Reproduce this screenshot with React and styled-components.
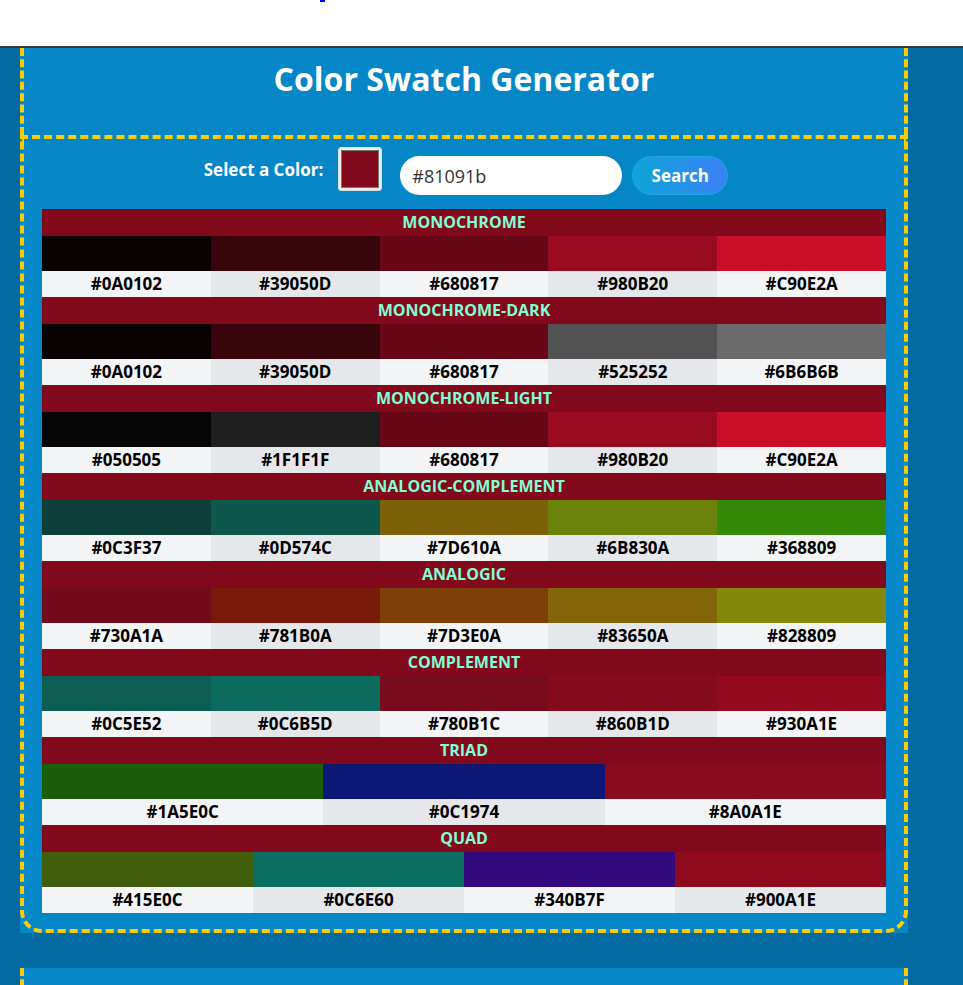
import React, { useState } from "react";
import styled, { createGlobalStyle } from "styled-components";

const GlobalStyle = createGlobalStyle`
  body {
    margin: 0;
    background: #036aa2;
    font-family: "Open Sans", "Liberation Sans", sans-serif;
  }
`;

const TopStrip = styled.div`
  height: 46px;
  background: #fff;
  position: relative;
  border-bottom: 2px solid #3a3a3a;
`;

const LinkMark = styled.a`
  position: absolute;
  left: 320px;
  top: 0;
  width: 5px;
  height: 2px;
  background: #0000ee;
`;

const Page = styled.main`
  background: #036aa2;
  padding: 0 55px 0 20px;
  height: 937px;
  overflow: hidden;
`;

const Card = styled.section`
  background: #0586c7;
  margin-bottom: 35px;
`;

const Header = styled.header`
  height: 87px;
  box-sizing: border-box;
  padding-top: 9px;
  border-left: 4px dashed #ffcc00;
  border-right: 4px dashed #ffcc00;
  text-align: center;
`;

const Title = styled.h1`
  margin: 0;
  color: #fff;
  font-size: 32px;
  line-height: 44px;
  font-weight: 700;
`;

const Body = styled.div`
  border: 4px dashed #ffcc00;
  border-radius: 0 0 22px 22px;
  padding: 8px 18px 16px 18px;
`;

const Form = styled.form`
  display: flex;
  justify-content: center;
  align-items: flex-start;
  margin-bottom: 14px;
  padding-left: 4px;
`;

const Label = styled.label`
  color: #fff;
  font-size: 17px;
  font-weight: 700;
  margin-top: 11px;
  margin-right: 15px;
`;

const ColorPicker = styled.input`
  width: 44px;
  height: 44px;
  padding: 2px;
  border: 1px solid #ddd;
  border-radius: 3px;
  background: #efefef;
  margin-right: 18px;
  cursor: pointer;

  &::-webkit-color-swatch-wrapper {
    padding: 0;
  }
  &::-webkit-color-swatch {
    border: 1px solid #777;
    border-radius: 0;
  }
`;

const HexInput = styled.input`
  margin-top: 9px;
  width: 222px;
  height: 39px;
  box-sizing: border-box;
  border: none;
  border-radius: 20px;
  padding: 0 12px;
  font-family: inherit;
  font-size: 18px;
  color: #333;
  outline: none;
`;

const SearchButton = styled.button`
  margin-top: 9px;
  margin-left: 10px;
  width: 96px;
  height: 39px;
  border-radius: 20px;
  border: 1px solid #1ea7e0;
  background: linear-gradient(90deg, #0ea5d7, #3b82f6);
  color: #fff;
  font-family: inherit;
  font-size: 17px;
  font-weight: 700;
  cursor: pointer;
`;

const Scheme = styled.div``;

const SchemeTitle = styled.div`
  height: 27px;
  line-height: 27px;
  background: #81091b;
  color: #7fffd4;
  text-align: center;
  font-size: 16px;
  font-weight: 700;
  text-transform: uppercase;
`;

const Row = styled.div`
  display: grid;
  grid-template-columns: repeat(${(p) => p.$cols}, 1fr);
`;

const Swatch = styled.div`
  height: 35px;
  background: ${(p) => p.$color};
`;

const Hex = styled.div`
  height: 26px;
  line-height: 26px;
  text-align: center;
  font-size: 17px;
  font-weight: 700;
  color: #000;
  background: ${(p) => (p.$odd ? "#e5e7eb" : "#f3f4f6")};
`;

const NextCard = styled(Card)`
  height: 120px;
`;

const schemes = [
  { mode: "monochrome", colors: ["#0A0102", "#39050D", "#680817", "#980B20", "#C90E2A"] },
  { mode: "monochrome-dark", colors: ["#0A0102", "#39050D", "#680817", "#525252", "#6B6B6B"] },
  { mode: "monochrome-light", colors: ["#050505", "#1F1F1F", "#680817", "#980B20", "#C90E2A"] },
  { mode: "analogic-complement", colors: ["#0C3F37", "#0D574C", "#7D610A", "#6B830A", "#368809"] },
  { mode: "analogic", colors: ["#730A1A", "#781B0A", "#7D3E0A", "#83650A", "#828809"] },
  { mode: "complement", colors: ["#0C5E52", "#0C6B5D", "#780B1C", "#860B1D", "#930A1E"] },
  { mode: "triad", colors: ["#1A5E0C", "#0C1974", "#8A0A1E"] },
  { mode: "quad", colors: ["#415E0C", "#0C6E60", "#340B7F", "#900A1E"] },
];

export default function App() {
  const [color, setColor] = useState("#81091b");

  return (
    <>
      <GlobalStyle />
      <TopStrip>
        <LinkMark href="#" />
      </TopStrip>
      <Page>
        <Card>
          <Header>
            <Title>Color Swatch Generator</Title>
          </Header>
          <Body>
            <Form onSubmit={(e) => e.preventDefault()}>
              <Label htmlFor="picker">Select a Color:</Label>
              <ColorPicker
                id="picker"
                type="color"
                value={color}
                onChange={(e) => setColor(e.target.value)}
              />
              <HexInput
                type="text"
                value={color}
                onChange={(e) => setColor(e.target.value)}
              />
              <SearchButton type="submit">Search</SearchButton>
            </Form>

            {schemes.map((s) => (
              <Scheme key={s.mode}>
                <SchemeTitle>{s.mode}</SchemeTitle>
                <Row $cols={s.colors.length}>
                  {s.colors.map((c, i) => (
                    <Swatch key={i} $color={c} />
                  ))}
                </Row>
                <Row $cols={s.colors.length}>
                  {s.colors.map((c, i) => (
                    <Hex key={i} $odd={i % 2 === 1}>
                      {c}
                    </Hex>
                  ))}
                </Row>
              </Scheme>
            ))}
          </Body>
        </Card>
        <NextCard>
          <Header />
        </NextCard>
      </Page>
    </>
  );
}
